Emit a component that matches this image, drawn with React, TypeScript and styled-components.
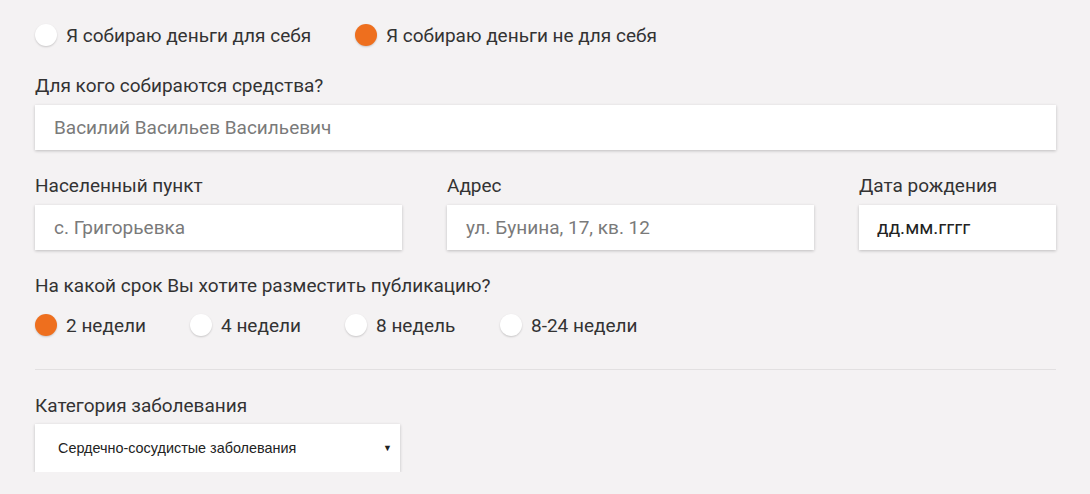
import React from "react";
import styled, { createGlobalStyle } from "styled-components";

const Global = createGlobalStyle`
  html, body { margin: 0; padding: 0; background: #f4f2f3; }
  body { font-family: Roboto, "Noto Sans", sans-serif; color: #333; }
  * { box-sizing: border-box; }
`;

const Page = styled.div`
  width: 1090px;
  padding: 24px 34px 0 35px;
  display: flex;
  flex-direction: column;
`;

const RadioRow = styled.div`
  display: flex;
  align-items: center;
  height: 22px;
`;

const RadioItem = styled.label<{ $width?: number }>`
  display: flex;
  align-items: center;
  gap: 9px;
  font-size: 19px;
  color: #333;
  ${(p) => (p.$width ? `width: ${p.$width}px;` : "")}
`;

const Dot = styled.span<{ $on?: boolean }>`
  width: 22px;
  height: 22px;
  border-radius: 50%;
  background: ${(p) => (p.$on ? "#ee6f1e" : "#fff")};
  box-shadow: 0 1px 2px rgba(0, 0, 0, 0.18);
  flex: none;
`;

const Label = styled.div`
  font-size: 19px;
  color: #333;
  line-height: 22px;
  margin-bottom: 8px;
`;

const Field = styled.div`
  display: flex;
  flex-direction: column;
`;

const Input = styled.div<{ $dark?: boolean }>`
  height: 45px;
  background: #fff;
  box-shadow: 0 1px 3px rgba(0, 0, 0, 0.22);
  display: flex;
  align-items: center;
  padding-left: ${(p) => (p.$dark ? "18px" : "19px")};
  font-size: 19px;
  color: ${(p) => (p.$dark ? "#222" : "#7a7a7a")};
`;

const Grid = styled.div`
  display: grid;
  grid-template-columns: 367px 367px 197px;
  column-gap: 45px;
`;

const Divider = styled.hr`
  border: none;
  border-top: 1px solid #e2e0e1;
  margin: 0;
`;

const Select = styled.div`
  width: 365px;
  height: 48px;
  margin-top: -1px;
  background: #fff;
  box-shadow: 0 1px 3px rgba(0, 0, 0, 0.22);
  display: flex;
  align-items: center;
  justify-content: space-between;
  padding: 0 8px 0 23px;
  font-size: 14.4px;
  font-family: "Liberation Sans", Arial, sans-serif;
  color: #222;
`;

const Arrow = styled.span`
  font-size: 9px;
  color: #222;
`;

const Spacer = styled.div<{ $h: number }>`
  height: ${(p) => p.$h}px;
  flex: none;
`;

export default function App() {
  return (
    <>
      <Global />
      <Page>
        <RadioRow>
          <RadioItem $width={320}>
            <Dot />
            Я собираю деньги для себя
          </RadioItem>
          <RadioItem>
            <Dot $on />
            Я собираю деньги не для себя
          </RadioItem>
        </RadioRow>
        <Spacer $h={29} />
        <Field>
          <Label>Для кого собираются средства?</Label>
          <Input>Василий Васильев Васильевич</Input>
        </Field>
        <Spacer $h={25} />
        <Grid>
          <Field>
            <Label>Населенный пункт</Label>
            <Input>с. Григорьевка</Input>
          </Field>
          <Field>
            <Label>Адрес</Label>
            <Input>ул. Бунина, 17, кв. 12</Input>
          </Field>
          <Field>
            <Label>Дата рождения</Label>
            <Input $dark>дд.мм.гггг</Input>
          </Field>
        </Grid>
        <Spacer $h={25} />
        <Label>На какой срок Вы хотите разместить публикацию?</Label>
        <Spacer $h={9} />
        <RadioRow>
          <RadioItem $width={155}>
            <Dot $on />2 недели
          </RadioItem>
          <RadioItem $width={155}>
            <Dot />4 недели
          </RadioItem>
          <RadioItem $width={155}>
            <Dot />8 недель
          </RadioItem>
          <RadioItem>
            <Dot />
            8-24 недели
          </RadioItem>
        </RadioRow>
        <Spacer $h={33} />
        <Divider />
        <Spacer $h={25} />
        <Label>Категория заболевания</Label>
        <Select>
          Сердечно-сосудистые заболевания
          <Arrow>▼</Arrow>
        </Select>
      </Page>
    </>
  );
}
